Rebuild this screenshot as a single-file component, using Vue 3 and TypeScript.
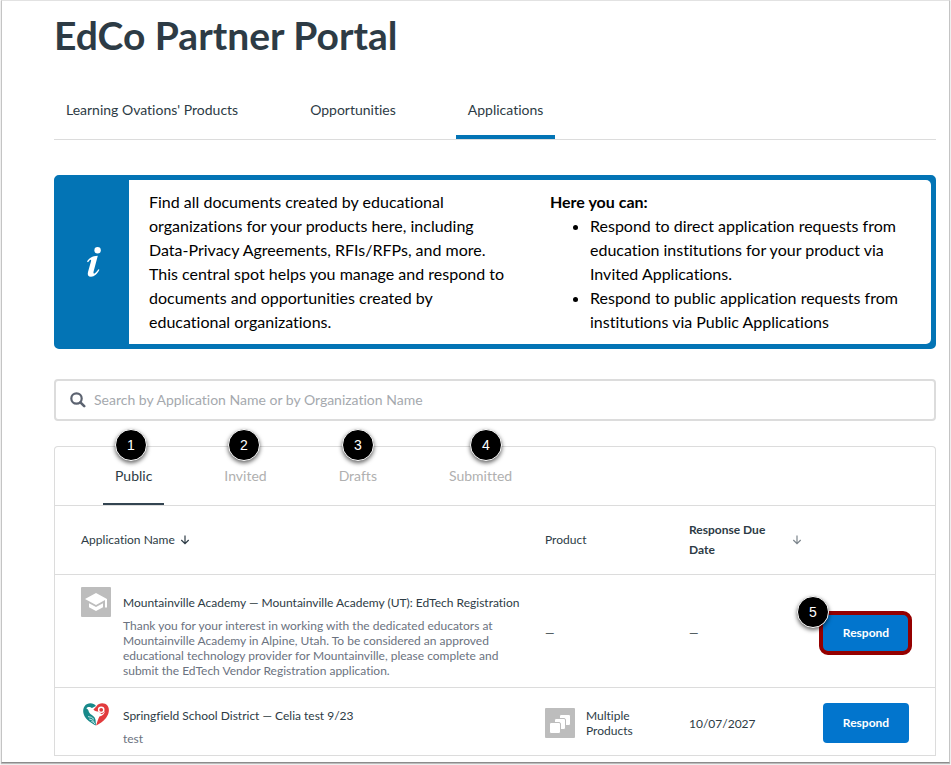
<script setup lang="ts">
import { ref } from 'vue'

interface Application {
  id: number
  title: string
  description: string
  logo: 'school' | 'heart'
  product: string | null
  due: string | null
  highlighted: boolean
}

interface Callout {
  label: string
  left: number
}

const sections = ["Learning Ovations' Products", 'Opportunities', 'Applications']
const currentSection = 'Applications'

const filters = ['Public', 'Invited', 'Drafts', 'Submitted']
const activeFilter = ref('Public')
const query = ref('')

const callouts: Callout[] = [
  { label: '1', left: 60 },
  { label: '2', left: 173 },
  { label: '3', left: 287 },
  { label: '4', left: 415 },
]

const applications: Application[] = [
  {
    id: 1,
    title: 'Mountainville Academy — Mountainville Academy (UT): EdTech Registration',
    description:
      'Thank you for your interest in working with the dedicated educators at Mountainville Academy in Alpine, Utah. To be considered an approved educational technology provider for Mountainville, please complete and submit the EdTech Vendor Registration application.',
    logo: 'school',
    product: null,
    due: null,
    highlighted: true,
  },
  {
    id: 2,
    title: 'Springfield School District — Celia test 9/23',
    description: 'test',
    logo: 'heart',
    product: 'Multiple Products',
    due: '10/07/2027',
    highlighted: false,
  },
]
</script>

<template>
  <div class="sheet">
    <main class="content">
      <h1 class="title">EdCo Partner Portal</h1>

      <nav class="sections">
        <a
          v-for="section in sections"
          :key="section"
          href="#"
          class="section"
          :class="{ current: section === currentSection }"
          >{{ section }}</a
        >
      </nav>

      <section class="banner">
        <div class="banner-icon">
          <svg width="18" height="32" viewBox="0 0 18 32" aria-hidden="true">
            <circle cx="12.6" cy="4.2" r="3.2" fill="#fff" />
            <path
              d="M2 15.6 C4.2 12 7 10.2 12.8 9.8 L8.6 25.4 C8.1 27.6 9 28 10.2 27 C11.4 26 12.6 24.6 13.4 23.2 L14.4 23.8 C12.4 27.6 9.4 30.8 6 30.8 C3.2 30.8 2.2 28.8 3 26 L6 15.2 C6.5 13.2 5.4 12.8 3 16.2 Z"
              fill="#fff"
            />
          </svg>
        </div>
        <div class="banner-body">
          <p class="banner-col">
            Find all documents created by educational organizations for your products here, including
            Data-Privacy Agreements, RFIs/RFPs, and more. This central spot helps you manage and respond
            to documents and opportunities created by educational organizations.
          </p>
          <div class="banner-col">
            <strong>Here you can:</strong>
            <ul>
              <li>
                Respond to direct application requests from education institutions for your product via
                Invited Applications.
              </li>
              <li>
                Respond to public application requests from institutions via Public Applications
              </li>
            </ul>
          </div>
        </div>
      </section>

      <label class="search">
        <svg width="16" height="16" viewBox="0 0 16 16" aria-hidden="true">
          <circle cx="6.5" cy="6.5" r="5.2" fill="none" stroke="#5c6370" stroke-width="2.2" />
          <path d="M10.4 10.4 L14.2 14.2" stroke="#5c6370" stroke-width="2.6" stroke-linecap="round" />
        </svg>
        <input
          v-model="query"
          type="text"
          aria-label="Search applications"
          placeholder="Search by Application Name or by Organization Name"
        />
      </label>

      <section class="panel">
        <div class="filters" role="tablist">
          <button
            v-for="filter in filters"
            :key="filter"
            type="button"
            role="tab"
            class="filter"
            :class="{ active: filter === activeFilter }"
            :aria-selected="filter === activeFilter"
            @click="activeFilter = filter"
          >
            {{ filter }}
          </button>
        </div>
        <span
          v-for="callout in callouts"
          :key="callout.label"
          class="callout on-panel"
          :style="{ left: callout.left + 'px' }"
          >{{ callout.label }}</span
        >

        <table class="applications">
          <colgroup>
            <col class="col-name" />
            <col class="col-product" />
            <col class="col-due" />
            <col class="col-action" />
          </colgroup>
          <thead>
            <tr>
              <th scope="col">
                <span class="sort">
                  Application Name
                  <svg width="10" height="10" viewBox="0 0 10 10" aria-hidden="true">
                    <path d="M5 0.5 V8.5 M1.3 5 L5 8.7 L8.7 5" />
                  </svg>
                </span>
              </th>
              <th scope="col">Product</th>
              <th scope="col" class="due-head">
                <span class="sort spread">
                  <b>Response Due Date</b>
                  <svg class="faint" width="10" height="10" viewBox="0 0 10 10" aria-hidden="true">
                    <path d="M5 0.5 V8.5 M1.3 5 L5 8.7 L8.7 5" />
                  </svg>
                </span>
              </th>
              <td></td>
            </tr>
          </thead>
          <tbody>
            <tr v-for="app in applications" :key="app.id">
              <td class="name-cell">
                <div class="entry">
                  <svg
                    v-if="app.logo === 'school'"
                    class="logo"
                    width="30"
                    height="30"
                    viewBox="0 0 30 30"
                    aria-hidden="true"
                  >
                    <rect width="30" height="30" rx="1" fill="#bdbdbd" />
                    <path d="M15 6 L4 12 L15 18 L24 13.1 V20.5 H26 V12 Z" fill="#fff" />
                    <path d="M8 16.2 V20.2 L15 24 L22 20.2 V16.2 L15 20 Z" fill="#fff" />
                  </svg>
                  <svg v-else class="logo" width="30" height="30" viewBox="0 0 30 30" aria-hidden="true">
                    <path
                      d="M15 6 C12.5 2.5 6.5 2.3 3.6 6.2 C0.8 10.2 2.4 15.6 6 19.6 C8.4 22.2 12 24 14.6 25.4 L15.2 23.5 L16 19 L15 14 L10 8.5 Z"
                      fill="#18898a"
                    />
                    <path
                      d="M15.5 6.2 C18 2.4 24 2.6 26.4 5.6 C29.2 9.4 27.8 14.4 25 18 C22 21.6 18.6 23.6 15.4 25.6 C14.4 22.5 16.8 19.8 16 15.6 L12 10 Z"
                      fill="#e23b3d"
                    />
                    <path
                      d="M5.4 8.4 C6.6 6.6 9.8 6.6 11.6 8.8 C13 10.6 14.8 11.6 17 11.4 L20.8 14.2 C22.4 13.4 23.4 12.4 24 10.8 C23.8 13.8 21.6 15.6 18.4 16.6 C16.8 19.4 16.4 22.4 15 25 C14.6 22.2 15 20 13.6 17.6 C12.4 15.4 9.4 15 8.2 12.6 C7.4 10.8 7.6 9.4 5.4 8.4 Z"
                      fill="#fff"
                    />
                    <circle cx="20.2" cy="9.8" r="2.6" fill="#e23b3d" stroke="#fff" stroke-width="1.4" />
                    <path
                      d="M7 16.6 Q10.8 16.6 13 19.4 M8.2 19 Q11.4 19.2 13.4 22 M10.4 21.4 Q12.4 21.6 14 24"
                      fill="none"
                      stroke="#d6eeee"
                      stroke-width="0.9"
                    />
                  </svg>
                  <div class="entry-text">
                    <div class="entry-title">{{ app.title }}</div>
                    <p class="entry-desc">{{ app.description }}</p>
                  </div>
                </div>
              </td>
              <td>
                <div v-if="app.product" class="product">
                  <svg class="logo" width="30" height="30" viewBox="0 0 30 30" aria-hidden="true">
                    <rect width="30" height="30" rx="1" fill="#bdbdbd" />
                    <g fill="#fff" stroke="#bdbdbd" stroke-width="1">
                      <rect x="14.5" y="6.5" width="11" height="11" rx="1.5" />
                      <rect x="9.5" y="10.5" width="11" height="11" rx="1.5" />
                      <rect x="4.5" y="14.5" width="11" height="11" rx="1.5" />
                    </g>
                  </svg>
                  <span>{{ app.product }}</span>
                </div>
                <template v-else>—</template>
              </td>
              <td>{{ app.due ?? '—' }}</td>
              <td>
                <div class="action" :class="{ highlighted: app.highlighted }">
                  <button type="button" class="respond">Respond</button>
                  <span v-if="app.highlighted" class="callout on-action">5</span>
                </div>
              </td>
            </tr>
          </tbody>
        </table>
      </section>
    </main>
  </div>
</template>

<style>
body {
  background: #fafafa;
}
</style>

<style scoped>
.sheet {
  margin: 0 1px 2px;
  padding: 0 13px 6px 52px;
  border: 1px solid #c4c4c4;
  border-top-color: #e2e2e2;
  border-bottom-color: #8c8c8c;
  background: #fff;
  box-shadow: 0 1px 1px rgba(0, 0, 0, 0.25);
  color: #2d3b45;
  font-family: Lato, 'Liberation Sans', sans-serif;
  font-size: 14px;
  font-variant-ligatures: none;
}

.title {
  margin: 0;
  padding-top: 10px;
  font-size: 39px;
  line-height: 48px;
  font-weight: 700;
}

.sections {
  display: flex;
  gap: 48px;
  margin-top: 21px;
  border-bottom: 1px solid #dcdcdc;
}

.section {
  padding: 20px 12px 15px;
  border-bottom: 4px solid transparent;
  color: #2d3b45;
  line-height: 20px;
  text-decoration: none;
}

.section.current {
  border-bottom-color: #0374b5;
}

.banner {
  display: flex;
  margin-top: 35px;
  border: 5px solid #0374b5;
  border-radius: 5px;
  background: #0374b5;
}

.banner-icon {
  display: flex;
  flex: 0 0 70px;
  align-items: center;
  justify-content: center;
}

.banner-body {
  display: grid;
  flex: 1;
  grid-template-columns: 1fr 1fr;
  border-radius: 0 5px 5px 0;
  background: #fff;
  color: #000;
  font-size: 16px;
  line-height: 24px;
}

.banner-col {
  margin: 0;
  padding: 10px 20px;
}

.banner-col ul {
  margin: 0;
  padding-left: 40px;
}

.search {
  display: flex;
  align-items: center;
  gap: 8px;
  margin-top: 30px;
  padding: 0 14px;
  border: 2px solid #dcdcdc;
  border-radius: 4px;
}

.search input {
  box-sizing: border-box;
  flex: 1;
  min-width: 0;
  height: 38px;
  padding: 0 0 2px;
  border: 0;
  outline: 0;
  background: none;
  color: #2d3b45;
  font: inherit;
}

.search input::placeholder {
  color: #a5a9ae;
  opacity: 1;
}

.panel {
  position: relative;
  margin-top: 25px;
  border: 1px solid #dcdcdc;
  border-bottom: 0;
  border-radius: 4px 4px 0 0;
}

.filters {
  display: flex;
  gap: 48px;
  padding: 0 48px;
  border-bottom: 1px solid #dcdcdc;
}

.filter {
  padding: 19px 12px 17px;
  border: 0;
  border-bottom: 2px solid transparent;
  background: none;
  color: #b0b0b0;
  font: inherit;
  font-variant-ligatures: none;
  line-height: 20px;
}

.filter.active {
  border-bottom-color: #334451;
  color: #2d3b45;
}

.callout {
  position: absolute;
  width: 30px;
  height: 30px;
  border: 1px solid #fff;
  border-radius: 50%;
  background: #000;
  box-shadow: 0 2px 4px rgba(0, 0, 0, 0.6);
  color: #fff;
  font: 14px/30px 'Liberation Sans', sans-serif;
  text-align: center;
}

.on-panel {
  top: -18px;
}

.on-action {
  top: -17px;
  left: -26px;
}

.applications {
  width: 100%;
  border-collapse: separate;
  border-spacing: 0;
  table-layout: fixed;
  font-size: 12px;
  line-height: 15px;
}

.col-product {
  width: 144px;
}

.col-due {
  width: 134px;
}

.col-action {
  width: 112px;
}

.applications th,
.applications td {
  padding: 3px 0 0;
  border-bottom: 1px solid #dcdcdc;
  text-align: left;
  vertical-align: middle;
}

.applications th {
  height: 68px;
  padding: 0;
  font-weight: 400;
  line-height: 20px;
}

.applications th:first-child,
.applications td.name-cell {
  padding-left: 26px;
}

.sort {
  display: flex;
  align-items: center;
  gap: 5px;
}

.spread {
  justify-content: space-between;
  padding-right: 21px;
}

.spread b {
  width: 80px;
}

.sort path {
  fill: none;
  stroke: #2d3b45;
  stroke-width: 1.2;
}

.sort .faint path {
  stroke: #7c858c;
}

.applications td.name-cell {
  padding-top: 12px;
  padding-bottom: 9px;
  vertical-align: top;
}

.entry {
  display: flex;
  gap: 12px;
}

.logo {
  flex: none;
}

.entry-text {
  padding-top: 7px;
}

.entry-title {
  line-height: 18px;
}

.entry-desc {
  max-width: 384px;
  margin: 6px 0 0;
  color: #6b7280;
}

.product {
  display: flex;
  align-items: center;
  gap: 11px;
  padding-right: 40px;
}

.action {
  position: relative;
  width: 86px;
}

.respond {
  display: block;
  width: 100%;
  height: 40px;
  padding: 0 0 1px;
  border: 0;
  border-radius: 4px;
  background: #0275cd;
  color: #fff;
  font: inherit;
  font-weight: 700;
}

.highlighted::before {
  position: absolute;
  inset: -2px -3px -2px -4px;
  border: 4px solid #950000;
  border-radius: 9px;
  content: '';
  pointer-events: none;
}
</style>
